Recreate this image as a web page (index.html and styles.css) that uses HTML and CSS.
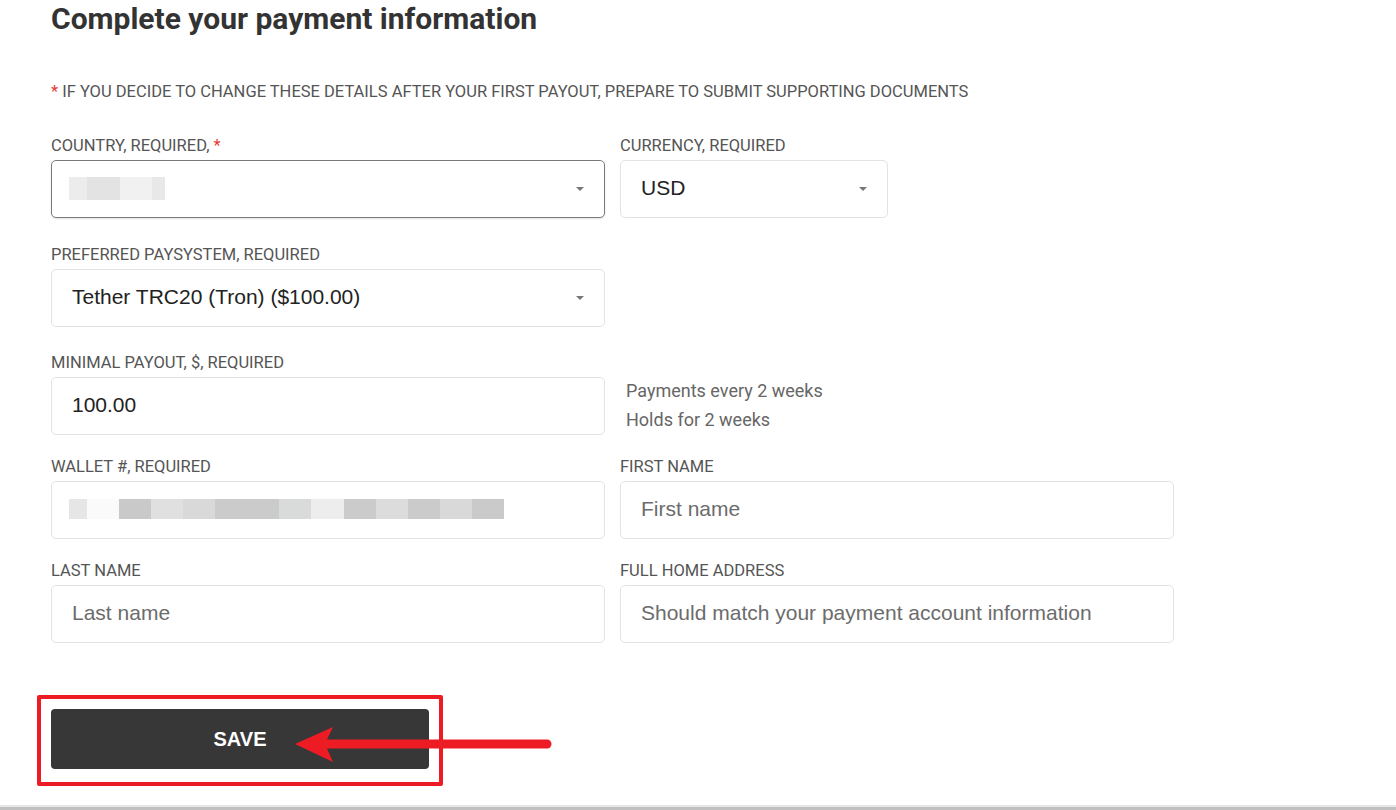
FILE: index.html
```html
<!DOCTYPE html>
<html lang="en">
<head>
    <meta charset="UTF-8">
    <meta name="viewport" content="width=device-width, initial-scale=1.0">
    <title>Payment information</title>
    <link rel="stylesheet" href="styles.css">
</head>
<body>
    <div class="page">
        <h1 class="title">Complete your payment information</h1>
        <p class="notice"><span class="req">*</span> IF YOU DECIDE TO CHANGE THESE DETAILS AFTER YOUR FIRST PAYOUT, PREPARE TO SUBMIT SUPPORTING DOCUMENTS</p>

        <form class="form" onsubmit="return false">
            <!-- row 1 -->
            <div class="field field--gap">
                <label class="label">COUNTRY, REQUIRED, <span class="req">*</span></label>
                <div class="control select is-focused"><span class="blur blur--country"></span></div>
            </div>
            <div class="field field--gap">
                <label class="label">CURRENCY, REQUIRED</label>
                <div class="control select control--short">USD</div>
            </div>

            <!-- row 2 -->
            <div class="field field--gap-sm">
                <label class="label">PREFERRED PAYSYSTEM, REQUIRED</label>
                <div class="control select">Tether TRC20 (Tron) ($100.00)</div>
            </div>
            <div class="field field--gap-sm"></div>

            <!-- row 3 -->
            <div class="field">
                <label class="label">MINIMAL PAYOUT, $, REQUIRED</label>
                <input class="control" type="text" value="100.00">
            </div>
            <div class="notes">
                <div>Payments every 2 weeks</div>
                <div>Holds for 2 weeks</div>
            </div>

            <!-- row 4 -->
            <div class="field">
                <label class="label">WALLET #, REQUIRED</label>
                <div class="control"><span class="blur blur--wallet"></span></div>
            </div>
            <div class="field">
                <label class="label">FIRST NAME</label>
                <input class="control" type="text" placeholder="First name">
            </div>

            <!-- row 5 -->
            <div class="field">
                <label class="label">LAST NAME</label>
                <input class="control" type="text" placeholder="Last name">
            </div>
            <div class="field">
                <label class="label">FULL HOME ADDRESS</label>
                <input class="control" type="text" placeholder="Should match your payment account information">
            </div>
        </form>

        <div class="save-area">
            <div class="save-box">
                <button class="save-btn" type="button">SAVE</button>
            </div>
            <svg class="arrow" width="258" height="38" viewBox="0 0 258 38">
                <path d="M0 18 L38 1 L32 13.5 L32 22.5 L38 36 Z" fill="#ed1c24"/>
                <line x1="30" y1="18" x2="252" y2="18" stroke="#ed1c24" stroke-width="9" stroke-linecap="round"/>
            </svg>
        </div>
    </div>
    <div class="bottom-line"></div>
</body>
</html>
```

FILE: styles.css
```css
:root {
    --text: #333;
    --muted: #555;
    --border: #e3e3e3;
    --red: #ed1c24;
    --dark: #373737;
}

* {
    box-sizing: border-box;
}

body {
    margin: 0;
    background: #fff;
    font-family: Roboto, "Noto Sans", sans-serif;
    color: var(--text);
}

.page {
    padding-left: 51px;
}

.title {
    margin: 0;
    padding-top: 1px;
    font-size: 30px;
    line-height: 36px;
    font-weight: 700;
    color: var(--text);
}

.notice {
    margin: 45px 0 0;
    font-size: 16.5px;
    line-height: 20px;
    color: var(--muted);
}

.req {
    color: #e53935;
}

.form {
    margin-top: 33px;
    display: grid;
    grid-template-columns: 554px 554px;
    column-gap: 15px;
    row-gap: 21px;
}

.field--gap {
    padding-bottom: 5px;
}

.field--gap-sm {
    padding-bottom: 4px;
}

.label {
    display: block;
    height: 20px;
    margin-bottom: 5px;
    font-size: 16.5px;
    line-height: 22px;
    color: var(--muted);
}

.control {
    position: relative;
    display: flex;
    align-items: center;
    width: 100%;
    height: 58px;
    padding: 0 20px 2px;
    border: 1px solid var(--border);
    border-radius: 5px;
    background: #fff;
    font-family: "Liberation Sans", Arial, sans-serif;
    font-size: 21px;
    color: #222;
    outline: none;
}

.control::placeholder {
    color: #6c6c6c;
}

.control--short {
    width: 268px;
}

.is-focused {
    border-color: #7a7a7a;
    box-shadow: 0 1px 2px rgba(0, 0, 0, 0.12);
}

.select::after {
    content: "";
    position: absolute;
    right: 20px;
    top: 50%;
    margin-top: -2px;
    border-left: 4px solid transparent;
    border-right: 4px solid transparent;
    border-top: 4px solid #777;
}

/* pixelated blur over hidden values */
.blur {
    display: block;
    margin-left: -3px;
}

.blur--country {
    width: 96px;
    height: 23px;
    background: linear-gradient(90deg, #ececec 0 18px, #e3e3e3 18px 51px, #f1f1f1 51px 83px, #e8e8e8 83px 96px);
}

.blur--wallet {
    width: 435px;
    height: 20px;
    background: linear-gradient(90deg,
        #e6e6e6 0 18px, #fafafa 18px 50px, #c9c9c9 50px 82px, #e0e0e0 82px 114px,
        #d9d9d9 114px 146px, #cbcbcb 146px 210px, #d9dbdb 210px 242px,
        #ededed 242px 275px, #cbcbcb 275px 307px, #dcdcdc 307px 339px,
        #cbcbcb 339px 371px, #d9d9d9 371px 403px, #cacaca 403px 435px);
}

.notes {
    padding-top: 24px;
    padding-left: 6px;
    font-size: 18px;
    line-height: 29px;
    color: #666;
}

.save-area {
    position: relative;
    margin-top: 52px;
}

.save-box {
    width: fit-content;
    margin-left: -14px;
    padding: 10px 10px 13px;
    border: 4px solid var(--red);
    border-radius: 2px;
}

.save-btn {
    display: block;
    width: 378px;
    height: 60px;
    border: none;
    border-radius: 4px;
    background: var(--dark);
    color: #fff;
    font-family: "Liberation Sans", Arial, sans-serif;
    font-size: 20px;
    font-weight: 700;
    cursor: pointer;
}

.arrow {
    position: absolute;
    left: 244px;
    top: 31px;
}

.bottom-line {
    margin-top: 19px;
    height: 5px;
    border-top: 2px solid #e6e6e6;
    background: #c0c0c0;
}
```
